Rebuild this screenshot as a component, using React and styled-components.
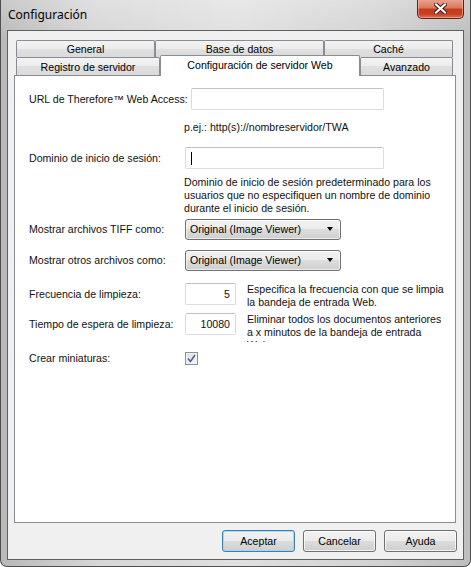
import React from 'react';
import styled, { createGlobalStyle } from 'styled-components';

const GlobalStyle = createGlobalStyle`
  *, *::before, *::after { box-sizing: border-box; }
  html, body { margin: 0; padding: 0; background: #fff; }
  body { width: 471px; height: 567px; overflow: hidden; }
`;

const dialogFont = `"Liberation Sans", Arial, sans-serif`;

const Window = styled.div`
  width: 471px;
  height: 567px;
  display: flex;
  flex-direction: column;
  border: 1px solid #4e4e4e;
  border-top: none;
  border-radius: 0 0 7px 7px;
  background:
    linear-gradient(to bottom, rgba(255,255,255,0.25), rgba(255,255,255,0) 40px),
    linear-gradient(to right, #b9b9b9 0%, #d6d6d6 20%, #e0e0e0 50%, #d2d2d2 80%, #bdbdbd 100%);
  overflow: hidden;
`;

const TitleBar = styled.div`
  height: 30px;
  flex: none;
  display: flex;
  justify-content: space-between;
  align-items: flex-start;
  padding: 0 6px 0 7px;
`;

const Title = styled.span`
  font-family: "Noto Sans", "Open Sans", sans-serif;
  font-size: 12px;
  line-height: 30px;
  color: #000;
`;

const CloseButton = styled.div`
  width: 47px;
  height: 20px;
  margin-top: -1px;
  display: flex;
  align-items: center;
  justify-content: center;
  border: 1px solid #5b2417;
  border-top: none;
  border-radius: 0 0 5px 5px;
  background: linear-gradient(#e9a795 0%, #dc7a5f 45%, #c7391c 55%, #c84022 80%, #d8775a 100%);
  box-shadow: inset 0 0 0 1px rgba(255, 210, 190, 0.45);
`;

const Client = styled.div`
  flex: 1;
  display: flex;
  flex-direction: column;
  margin: 0 6px 6px 6px;
  padding: 9px 7px 7px 6px;
  border: 1px solid #5f5f5f;
  background: #f0f0f0;
`;

const TabRow = styled.div`
  display: flex;
  height: ${p => p.$height}px;
  margin-left: 2px;
  width: 437px;
`;

const Tab = styled.div`
  width: ${p => p.$width}px;
  flex: none;
  display: flex;
  align-items: center;
  justify-content: center;
  font-family: ${dialogFont};
  font-size: 10.6px;
  color: #000;
  border: 1px solid #898c95;
  border-bottom: none;
  border-radius: 2px 2px 0 0;
  background: linear-gradient(#f3f3f3 0%, #ececec 50%, #e0e0e0 50%, #dadada 100%);
  white-space: nowrap;
`;

const ActiveTab = styled(Tab)`
  height: 21px;
  margin-top: -2px;
  padding-bottom: 2px;
  background: #fff;
  z-index: 2;
`;

const Panel = styled.div`
  flex: 1;
  border: 1px solid #898c95;
  background: #fff;
  padding: 12px 0 0 14px;
  font-family: ${dialogFont};
  font-size: 10.6px;
  color: #111;
`;

const Row = styled.div`
  display: flex;
  align-items: ${p => (p.$top ? 'flex-start' : 'center')};
  margin-top: ${p => p.$gap}px;
`;

const Label = styled.div`
  width: ${p => p.$width || 156}px;
  flex: none;
  line-height: 22px;
  white-space: nowrap;
`;

const TextBox = styled.div`
  width: ${p => p.$width}px;
  height: 22px;
  flex: none;
  display: flex;
  align-items: center;
  justify-content: ${p => (p.$right ? 'flex-end' : 'flex-start')};
  padding: 0 5px;
  border: 1px solid #d9dce1;
  border-top-color: #bfc2c8;
  border-radius: 2px;
  background: #fff;
`;

const Caret = styled.span`
  width: 1px;
  height: 13px;
  background: #000;
`;

const Note = styled.div`
  margin-top: ${p => p.$gap}px;
  padding-left: 155px;
  line-height: ${p => p.$line}px;
  white-space: nowrap;
`;

const Side = styled.div`
  margin-left: 11px;
  line-height: 13px;
  white-space: nowrap;
  height: ${p => (p.$clip ? `${p.$clip}px` : 'auto')};
  overflow: hidden;
`;

const Dropdown = styled.div`
  width: 156px;
  height: 21px;
  flex: none;
  display: flex;
  align-items: center;
  justify-content: space-between;
  padding: 0 7px 0 4px;
  border: 1px solid #707070;
  border-radius: 3px;
  background: linear-gradient(#f2f2f2 0%, #ebebeb 50%, #dddddd 50%, #cfcfcf 100%);
  box-shadow: inset 0 0 0 1px rgba(255, 255, 255, 0.6);
  color: #000;
`;

const Arrow = styled.span`
  width: 0;
  height: 0;
  border-left: 3.5px solid transparent;
  border-right: 3.5px solid transparent;
  border-top: 4px solid #000;
`;

const CheckBox = styled.div`
  width: 13px;
  height: 13px;
  flex: none;
  display: flex;
  align-items: center;
  justify-content: center;
  border: 1px solid #8e8f8f;
  background: linear-gradient(135deg, #dcdcdc, #fafafa);
  box-shadow: inset 0 0 0 1px #f4f4f4;
`;

const ButtonBar = styled.div`
  display: flex;
  justify-content: flex-end;
  gap: 8px;
  margin: 7px -1px 0 0;
`;

const Button = styled.div`
  width: 73px;
  height: 22px;
  display: flex;
  align-items: center;
  justify-content: center;
  font-family: ${dialogFont};
  font-size: 10.6px;
  color: #000;
  border: 1px solid ${p => (p.$default ? '#3c7fb1' : '#707070')};
  border-radius: 3px;
  background: linear-gradient(#f2f2f2 0%, #ebebeb 50%, #dddddd 50%, #cfcfcf 100%);
  box-shadow: inset 0 0 0 1px ${p => (p.$default ? 'rgba(160, 215, 245, 0.9)' : 'rgba(255, 255, 255, 0.7)')};
`;

function CloseGlyph() {
  return (
    <svg width="13" height="11" viewBox="0 0 13 11">
      <path d="M2 1.5 L11 9.5 M11 1.5 L2 9.5" stroke="#3a1a12" strokeWidth="4" strokeLinecap="square" />
      <path d="M2 1.5 L11 9.5 M11 1.5 L2 9.5" stroke="#fff" strokeWidth="2.2" strokeLinecap="square" />
    </svg>
  );
}

function CheckMark() {
  return (
    <svg width="9" height="9" viewBox="0 0 9 9">
      <path d="M1 4.5 L3.5 7.5 L8 1" fill="none" stroke="#51648f" strokeWidth="1.6" />
    </svg>
  );
}

export default function App() {
  return (
    <>
      <GlobalStyle />
      <Window>
        <TitleBar>
          <Title>Configuración</Title>
          <CloseButton><CloseGlyph /></CloseButton>
        </TitleBar>
        <Client>
          <TabRow $height={17}>
            <Tab $width={139}>General</Tab>
            <Tab $width={169}>Base de datos</Tab>
            <Tab $width={129}>Caché</Tab>
          </TabRow>
          <TabRow $height={18}>
            <Tab $width={144}>Registro de servidor</Tab>
            <ActiveTab $width={200}>Configuración de servidor Web</ActiveTab>
            <Tab $width={93}>Avanzado</Tab>
          </TabRow>
          <Panel>
            <Row $gap={0}>
              <Label $width={162}>URL de Therefore™ Web Access:</Label>
              <TextBox $width={193} />
            </Row>
            <Note $gap={10} $line={14}>p.ej.: http(s)://nombreservidor/TWA</Note>
            <Row $gap={13}>
              <Label>Dominio de inicio de sesión:</Label>
              <TextBox $width={199}><Caret /></TextBox>
            </Row>
            <Note $gap={7} $line={13}>
              Dominio de inicio de sesión predeterminado para los<br />
              usuarios que no especifiquen un nombre de dominio<br />
              durante el inicio de sesión.
            </Note>
            <Row $gap={3}>
              <Label>Mostrar archivos TIFF como:</Label>
              <Dropdown>Original (Image Viewer)<Arrow /></Dropdown>
            </Row>
            <Row $gap={9}>
              <Label>Mostrar otros archivos como:</Label>
              <Dropdown>Original (Image Viewer)<Arrow /></Dropdown>
            </Row>
            <Row $gap={12} $top>
              <Label>Frecuencia de limpieza:</Label>
              <TextBox $width={51} $right>5</TextBox>
              <Side>
                Especifica la frecuencia con que se limpia<br />
                la bandeja de entrada Web.
              </Side>
            </Row>
            <Row $gap={4} $top>
              <Label>Tiempo de espera de limpieza:</Label>
              <TextBox $width={51} $right>10080</TextBox>
              <Side $clip={29}>
                Eliminar todos los documentos anteriores<br />
                a x minutos de la bandeja de entrada<br />
                Web.
              </Side>
            </Row>
            <Row $gap={5}>
              <Label>Crear miniaturas:</Label>
              <CheckBox><CheckMark /></CheckBox>
            </Row>
          </Panel>
          <ButtonBar>
            <Button $default>Aceptar</Button>
            <Button>Cancelar</Button>
            <Button>Ayuda</Button>
          </ButtonBar>
        </Client>
      </Window>
    </>
  );
}
